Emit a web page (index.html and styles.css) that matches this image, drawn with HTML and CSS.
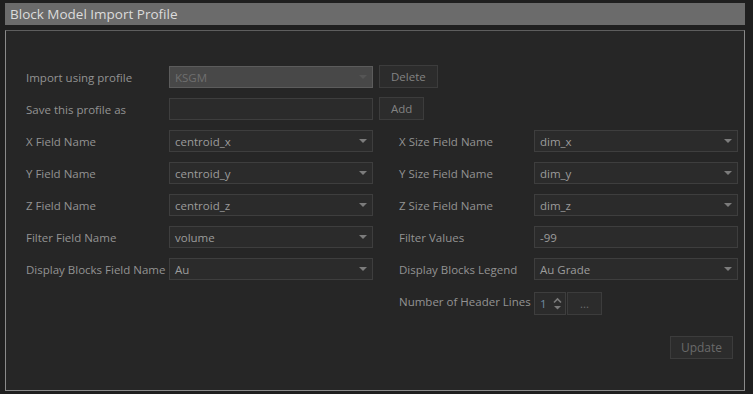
FILE: index.html
```html
<!DOCTYPE html>
<html lang="en">
<head>
  <meta charset="UTF-8" />
  <meta name="viewport" content="width=device-width, initial-scale=1.0" />
  <title>Block Model Import Profile</title>
  <link rel="stylesheet" href="styles.css">
</head>
<body>
  <div class="panel">
    <div class="title-bar">Block Model Import Profile</div>

    <div class="group-box">
      <div class="form-grid">
        <!-- profile rows -->
        <label class="field-label">Import using profile</label>
        <div class="combo disabled"><span>KSGM</span><i class="arrow"></i></div>
        <div class="row-actions"><button class="btn">Delete</button></div>

        <label class="field-label">Save this profile as</label>
        <div class="text-input"></div>
        <div class="row-actions"><button class="btn">Add</button></div>

        <!-- field names -->
        <label class="field-label">X Field Name</label>
        <div class="combo"><span>centroid_x</span><i class="arrow"></i></div>
        <label class="field-label right">X Size Field Name</label>
        <div class="combo"><span>dim_x</span><i class="arrow"></i></div>

        <label class="field-label">Y Field Name</label>
        <div class="combo"><span>centroid_y</span><i class="arrow"></i></div>
        <label class="field-label right">Y Size Field Name</label>
        <div class="combo"><span>dim_y</span><i class="arrow"></i></div>

        <label class="field-label">Z Field Name</label>
        <div class="combo"><span>centroid_z</span><i class="arrow"></i></div>
        <label class="field-label right">Z Size Field Name</label>
        <div class="combo"><span>dim_z</span><i class="arrow"></i></div>

        <label class="field-label">Filter Field Name</label>
        <div class="combo"><span>volume</span><i class="arrow"></i></div>
        <label class="field-label right">Filter Values</label>
        <div class="text-input"><span>-99</span></div>

        <label class="field-label">Display Blocks Field Name</label>
        <div class="combo"><span>Au</span><i class="arrow"></i></div>
        <label class="field-label right">Display Blocks Legend</label>
        <div class="combo"><span>Au Grade</span><i class="arrow"></i></div>

        <label class="field-label right">Number of Header Lines</label>
        <div class="header-lines">
          <div class="spinner">
            <span>1</span>
            <div class="spin-arrows">
              <svg width="9" height="14" viewBox="0 0 9 14">
                <path d="M1 5.5 L4.5 2 L8 5.5" fill="none" stroke="#7a7a7a" stroke-width="1.6"/>
                <path d="M1 9 L8 9 L4.5 12.5 Z" fill="#7a7a7a"/>
              </svg>
            </div>
          </div>
          <button class="btn dots">...</button>
        </div>
      </div>

      <div class="footer">
        <button class="btn update">Update</button>
      </div>
    </div>
  </div>
</body>
</html>
```

FILE: styles.css
```css
body {
  margin: 0;
  padding: 0;
  background: #1f1f1f;
  font-family: 'Open Sans', 'Noto Sans', sans-serif;
  overflow: hidden;
}

.panel {
  width: 740px;
  padding: 3px 0 0 5px;
}

.title-bar {
  height: 22px;
  line-height: 22px;
  padding-left: 5px;
  background: #6b6b6b;
  color: #dcdcdc;
  font-size: 13.5px;
}

.group-box {
  margin-top: 5px;
  height: 361px;
  box-sizing: border-box;
  background: #262626;
  border: 1px solid #8a8a8a;
  border-top-color: #5e5e5e;
  padding: 35px 6px 0 20px;
  display: flex;
  flex-direction: column;
}

.form-grid {
  display: grid;
  grid-template-columns: 143px 204px 26px 135px 204px;
  grid-auto-rows: 22px;
  row-gap: 10px;
  font-size: 11.5px;
}

.field-label {
  grid-column: 1;
  color: #939393;
  display: flex;
  align-items: center;
  white-space: nowrap;
}

.field-label.right {
  grid-column: 4;
}

.combo,
.text-input {
  box-sizing: border-box;
  height: 22px;
  background: #2b2b2b;
  border: 1px solid #3e3e3e;
  color: #9c9c9c;
  display: flex;
  align-items: center;
  padding-left: 5px;
  position: relative;
}

.combo.disabled {
  background: #484848;
  border-color: #5c5c5c;
  color: #6f6f6f;
}

.combo.disabled .arrow {
  border-top-color: #555;
}

.arrow {
  position: absolute;
  right: 5px;
  top: 8px;
  width: 0;
  height: 0;
  border-left: 4px solid transparent;
  border-right: 4px solid transparent;
  border-top: 4px solid #7c7c7c;
}

.row-actions {
  grid-column: 3 / span 3;
  display: flex;
  padding-left: 6px;
}

.btn {
  box-sizing: border-box;
  height: 23px;
  margin-top: -1px;
  background: #2c2c2c;
  border: 1px solid #3c3c3c;
  color: #838383;
  font-family: inherit;
  font-size: 11.5px;
  padding: 0 11px;
}

.header-lines {
  grid-column: 5;
  display: flex;
  gap: 1px;
}

.spinner {
  box-sizing: border-box;
  width: 32px;
  height: 23px;
  background: #2b2b2b;
  border: 1px solid #3e3e3e;
  color: #6f8aa0;
  display: flex;
  align-items: center;
  justify-content: space-between;
  padding: 0 3px 0 5px;
  margin-top: 2px;
}

.spin-arrows {
  display: flex;
}

.btn.dots {
  width: 35px;
  padding: 0;
  margin-top: 2px;
  color: #6c6c6c;
}

.footer {
  margin-top: auto;
  margin-bottom: 31px;
  margin-right: 5px;
  display: flex;
  justify-content: flex-end;
}

.btn.update {
  width: 63px;
  height: 23px;
  padding: 0;
  color: #6a6a6a;
  font-size: 12px;
}
```
